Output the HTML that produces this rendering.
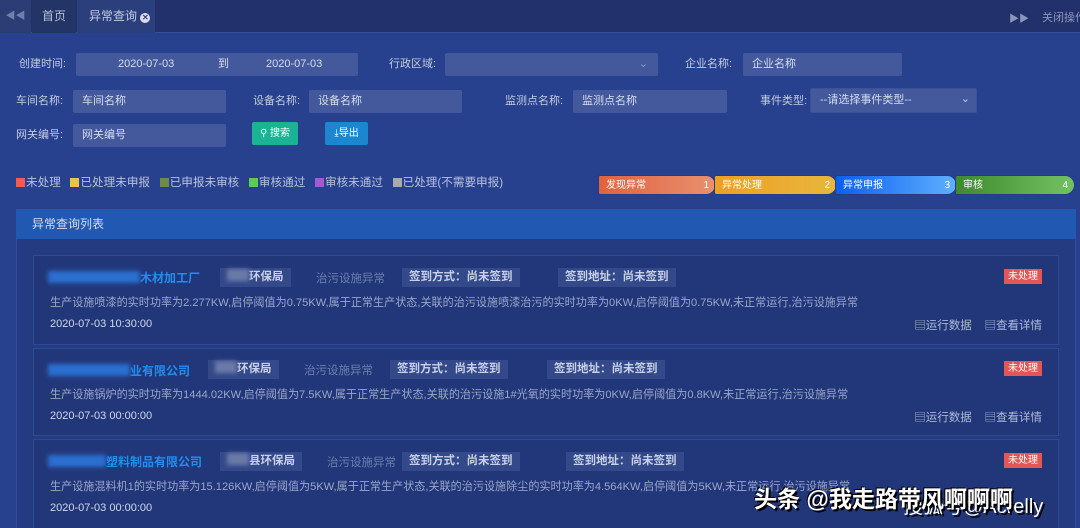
<!DOCTYPE html>
<html><head><meta charset="utf-8"><style>
*{margin:0;padding:0;box-sizing:border-box}
html,body{width:1080px;height:528px;overflow:hidden}
body{background:#27418e;font-family:"Liberation Sans","Noto Sans CJK SC",sans-serif;font-size:11px;color:#c8d0e4;position:relative;white-space:nowrap}
.a{position:absolute}
.top{left:0;top:0;width:1080px;height:33px;background:#22316c;border-bottom:1px solid #34509a}
.inp{position:absolute;background:#43599c;height:23px;color:#d6dcef;font-size:11px;line-height:23px;padding-left:9px;border-radius:2px}
.lbl{position:absolute;font-size:11px;color:#c3cbe0;line-height:23px}
.lg span{display:inline-block;width:9px;height:9px;margin-right:1px;vertical-align:-1px}
.card{position:absolute;left:33px;width:1026px;background:#22377a;border:1px solid #2e4a95}
.nm{position:absolute;color:#1f8ef0;font-weight:bold;font-size:12px}
.blur{display:inline-block;background:#2b6fd0;filter:blur(2px);height:12px;vertical-align:-1px}
.tag{position:absolute;background:#34498a;color:#c9d1e6;font-weight:bold;padding:0 7px;height:19px;line-height:19px;font-size:11.5px}
.gray{position:absolute;color:#6d7fae;font-size:11.5px}
.desc{position:absolute;left:16px;color:#9aa6c8;font-size:11.1px}
.dt{position:absolute;left:16px;color:#d2d8ea}
.st{position:absolute;right:16px;background:#e45656;color:#fff;font-size:10px;padding:0 4px;height:15px;line-height:15px}
.ops{position:absolute;right:16px;color:#aeb8d6;font-size:11.5px}
.step{position:absolute;top:175px;height:20px;color:#fff;font-size:10px;line-height:20px;padding-left:7px;border-radius:2px 10px 10px 2px}
.step b{position:absolute;right:6px;font-weight:normal}
</style></head><body>
<div class="a top"></div>
<div class="a" style="left:0;top:0;width:31px;height:33px;background:#2c3d75;color:#6f7fab;font-size:10px;line-height:33px;text-align:center">◀◀</div>
<div class="a" style="left:32px;top:0;width:44px;height:33px;background:#233567;color:#b5bed8;line-height:33px;text-align:center;font-size:12px">首页</div>
<div class="a" style="left:77px;top:0;width:78px;height:33px;background:#2b3f7c;color:#c3cbe3;line-height:33px;padding-left:12px;font-size:12px">异常查询 <span style="display:inline-block;width:10px;height:10px;border-radius:50%;background:#dde;color:#2b3f7c;font-size:8px;line-height:10px;text-align:center;font-weight:bold">✕</span></div>
<div class="a" style="left:1009px;top:10px;color:#8a97bd;font-size:10px">▶▶</div>
<div class="a" style="left:1042px;top:9px;color:#8a97bd">关闭操作</div>

<div class="lbl" style="left:19px;top:53px">创建时间:</div>
<div class="inp" style="left:76px;top:53px;width:282px;padding:0"><span class="a" style="left:42px">2020-07-03</span><span class="a" style="left:142px">到</span><span class="a" style="left:190px">2020-07-03</span></div>
<div class="lbl" style="left:389px;top:53px">行政区域:</div>
<div class="inp" style="left:445px;top:53px;width:213px"><span class="a" style="right:10px;top:0;color:#8a98c4">⌄</span></div>
<div class="lbl" style="left:685px;top:53px">企业名称:</div>
<div class="inp" style="left:743px;top:53px;width:159px">企业名称</div>

<div class="lbl" style="left:16px;top:90px">车间名称:</div>
<div class="inp" style="left:73px;top:90px;width:153px">车间名称</div>
<div class="lbl" style="left:253px;top:90px">设备名称:</div>
<div class="inp" style="left:309px;top:90px;width:153px">设备名称</div>
<div class="lbl" style="left:505px;top:90px">监测点名称:</div>
<div class="inp" style="left:573px;top:90px;width:154px">监测点名称</div>
<div class="lbl" style="left:760px;top:90px">事件类型:</div>
<div class="inp" style="left:810px;top:88px;width:167px;height:25px;line-height:23px;border:1px solid #3a5298">--请选择事件类型--<span class="a" style="right:6px;top:-1px;color:#ccd">⌄</span></div>

<div class="lbl" style="left:16px;top:124px">网关编号:</div>
<div class="inp" style="left:73px;top:124px;width:153px">网关编号</div>
<div class="a" style="left:252px;top:122px;width:46px;height:23px;background:#1ab394;color:#fff;font-size:10px;line-height:23px;text-align:center;border-radius:2px">⚲ 搜索</div>
<div class="a" style="left:325px;top:122px;width:43px;height:23px;background:#1c86cf;color:#fff;font-size:10px;line-height:23px;text-align:center;border-radius:2px">⤓导出</div>

<div class="a lg" style="left:16px;top:174px;color:#b8c1da;font-size:11.6px">
<span style="background:#f05a5a"></span>未处理&nbsp;&nbsp; <span style="background:#efc14a"></span>已处理未申报&nbsp;&nbsp; <span style="background:#6e8a46"></span>已申报未审核&nbsp;&nbsp; <span style="background:#5ccb5c"></span>审核通过&nbsp;&nbsp; <span style="background:#a35ad0"></span>审核未通过&nbsp;&nbsp; <span style="background:#aaa"></span>已处理(不需要申报)</div>

<div class="step" style="left:598px;width:118px;background:linear-gradient(90deg,#e0623e,#e99070);border:1px solid #253c88">发现异常<b>1</b></div>
<div class="step" style="left:714px;width:123px;background:linear-gradient(90deg,#eda021,#e8b63f);border:1px solid #253c88">异常处理<b>2</b></div>
<div class="step" style="left:835px;width:122px;background:linear-gradient(90deg,#0b5ff0,#5fb0ff);border:1px solid #253c88">异常申报<b>3</b></div>
<div class="step" style="left:955px;width:120px;background:linear-gradient(90deg,#3e8a2e,#73c262);border:1px solid #253c88">审核<b>4</b></div>

<div class="a" style="left:16px;top:209px;width:1060px;height:330px;background:#243b82;border:1px solid #2e4c9a"></div>
<div class="a" style="left:16px;top:209px;width:1060px;height:30px;background:#2158b1;color:#d5def2;line-height:30px;padding-left:16px;font-size:12px">异常查询列表</div>

<div class="card" style="top:255px;height:90px">
<div class="nm" style="left:14px;top:13px"><span class="blur" style="width:92px"></span>木材加工厂</div>
<div class="tag" style="left:186px;top:12px"><span class="blur" style="width:22px;background:#6a7aa8"></span>环保局</div>
<div class="gray" style="left:282px;top:14px">治污设施异常</div>
<div class="tag" style="left:368px;top:12px">签到方式：尚未签到</div>
<div class="tag" style="left:524px;top:12px">签到地址：尚未签到</div>
<div class="st" style="top:13px">未处理</div>
<div class="desc" style="top:38px">生产设施喷漆的实时功率为2.277KW,启停阈值为0.75KW,属于正常生产状态,关联的治污设施喷漆治污的实时功率为0KW,启停阈值为0.75KW,未正常运行,治污设施异常</div>
<div class="dt" style="top:62px">2020-07-03 10:30:00</div>
<div class="ops" style="top:61px">▤运行数据&nbsp;&nbsp;&nbsp;&nbsp;▤查看详情</div>
</div>
<div class="card" style="top:348px;height:88px">
<div class="nm" style="left:14px;top:13px"><span class="blur" style="width:82px"></span>业有限公司</div>
<div class="tag" style="left:174px;top:11px"><span class="blur" style="width:22px;background:#6a7aa8"></span>环保局</div>
<div class="gray" style="left:270px;top:13px">治污设施异常</div>
<div class="tag" style="left:356px;top:11px">签到方式：尚未签到</div>
<div class="tag" style="left:513px;top:11px">签到地址：尚未签到</div>
<div class="st" style="top:12px">未处理</div>
<div class="desc" style="top:37px">生产设施锅炉的实时功率为1444.02KW,启停阈值为7.5KW,属于正常生产状态,关联的治污设施1#光氧的实时功率为0KW,启停阈值为0.8KW,未正常运行,治污设施异常</div>
<div class="dt" style="top:61px">2020-07-03 00:00:00</div>
<div class="ops" style="top:60px">▤运行数据&nbsp;&nbsp;&nbsp;&nbsp;▤查看详情</div>
</div>
<div class="card" style="top:439px;height:95px">
<div class="nm" style="left:14px;top:13px"><span class="blur" style="width:58px"></span>塑料制品有限公司</div>
<div class="tag" style="left:186px;top:12px"><span class="blur" style="width:22px;background:#6a7aa8"></span>县环保局</div>
<div class="gray" style="left:293px;top:14px">治污设施异常</div>
<div class="tag" style="left:368px;top:12px">签到方式：尚未签到</div>
<div class="tag" style="left:532px;top:12px">签到地址：尚未签到</div>
<div class="st" style="top:13px">未处理</div>
<div class="desc" style="top:38px">生产设施混料机1的实时功率为15.126KW,启停阈值为5KW,属于正常生产状态,关联的治污设施除尘的实时功率为4.564KW,启停阈值为5KW,未正常运行,治污设施异常</div>
<div class="dt" style="top:62px">2020-07-03 00:00:00</div>
</div>

<div class="a" style="left:903px;top:490px;color:#fff;font-size:20px;text-shadow:2px 2px 0 #000">搜狐号@Acrelly</div>
<div class="a" style="left:754px;top:480px;color:#fff;font-size:23px;font-weight:bold;text-shadow:2px 2px 0 #000,-1px -1px 0 #000">头条 @我走路带风啊啊啊</div>
</body></html>
